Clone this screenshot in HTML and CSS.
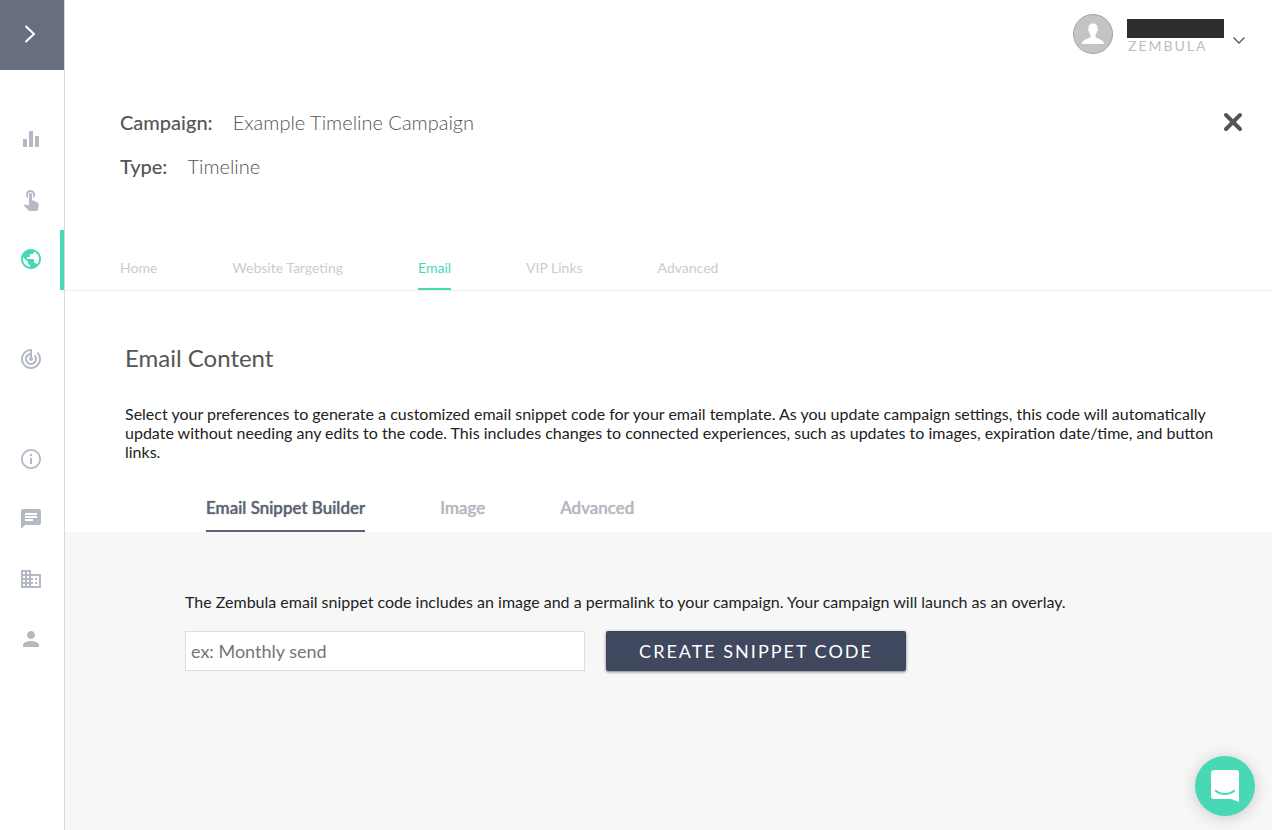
FILE: index.html
```html
<!DOCTYPE html>
<html lang="en">
<head>
<meta charset="utf-8">
<meta name="viewport" content="width=device-width, initial-scale=1">
<title>Email Content</title>
<link rel="stylesheet" href="styles.css">
</head>
<body>
<div class="app">
  <aside class="sidebar">
    <button class="expand" type="button" aria-label="Expand menu">
      <svg width="12" height="20" viewBox="0 0 12 20"><path d="M1.500 2l8.500 8-8.500 8" fill="none" stroke="#fff" stroke-width="2"/></svg>
    </button>
    <nav class="side-nav" aria-label="Main">
      <a class="side-link" href="#" aria-label="Analytics"><svg class="icon" viewBox="0 0 24 24"><path d="M4 12h4v8H4zM10 4h4v16h-4zM16 9h4v11h-4z"/></svg></a>
      <a class="side-link" href="#" aria-label="Experiences"><svg class="icon" viewBox="0 0 24 24"><path d="M9 11.240V7.500C9 6.120 10.120 5 11.500 5S14 6.120 14 7.500v3.740c1.210-.81 2-2.180 2-3.740C16 5.010 13.990 3 11.500 3S7 5.010 7 7.500c0 1.560.79 2.930 2 3.740zm9.840 4.630l-4.540-2.260c-.17-.07-.35-.11-.54-.11H13v-6c0-.83-.67-1.500-1.500-1.500S10 6.670 10 7.500v10.740l-3.430-.72c-.08-.01-.15-.03-.24-.03-.31 0-.59.13-.79.33l-.79.8 4.940 4.940c.27.27.65.44 1.060.44h6.790c.75 0 1.330-.55 1.440-1.280l.75-5.270c.01-.07.02-.14.020-.2 0-.62-.38-1.160-.91-1.380z"/></svg></a>
      <a class="side-link active" href="#" aria-label="Campaigns" aria-current="page"><svg class="icon" viewBox="0 0 24 24"><path d="M12 2C6.480 2 2 6.480 2 12s4.480 10 10 10 10-4.480 10-10S17.520 2 12 2zm-1 17.930c-3.950-.49-7-3.850-7-7.930 0-.62.08-1.210.21-1.790L9 15v1c0 1.100.9 2 2 2v1.930zm6.900-2.540c-.26-.81-1-1.390-1.900-1.390h-1v-3c0-.55-.45-1-1-1H8v-2h2c.55 0 1-.45 1-1V7h2c1.100 0 2-.9 2-2v-.41c2.930 1.190 5 4.060 5 7.410 0 2.080-.8 3.970-2.100 5.390z"/></svg></a>
      <a class="side-link spaced" href="#" aria-label="Tracking"><svg class="icon" viewBox="0 0 24 24"><path d="M19.070 4.930l-1.410 1.410C19.100 7.790 20 9.790 20 12c0 4.420-3.580 8-8 8s-8-3.580-8-8c0-4.080 3.050-7.440 7-7.930v2.020C8.160 6.570 6 9.030 6 12c0 3.310 2.690 6 6 6s6-2.690 6-6c0-1.660-.67-3.160-1.760-4.240l-1.410 1.410C15.550 9.900 16 10.900 16 12c0 2.210-1.790 4-4 4s-4-1.790-4-4c0-1.860 1.280-3.410 3-3.860v2.140c-.6.35-1 .98-1 1.720 0 1.100.9 2 2 2s2-.9 2-2c0-.74-.4-1.380-1-1.720V2h-1C6.480 2 2 6.480 2 12s4.480 10 10 10 10-4.480 10-10c0-2.760-1.120-5.260-2.930-7.070z"/></svg></a>
      <a class="side-link spaced" href="#" aria-label="Information"><svg class="icon" viewBox="0 0 24 24"><path d="M11 17h2v-6h-2v6zm1-15C6.480 2 2 6.480 2 12s4.480 10 10 10 10-4.480 10-10S17.520 2 12 2zm0 18.200c-4.520 0-8.200-3.680-8.200-8.200S7.480 3.800 12 3.800s8.200 3.680 8.200 8.200-3.680 8.200-8.200 8.200zM11 9h2V7h-2v2z"/></svg></a>
      <a class="side-link" href="#" aria-label="Messages"><svg class="icon" viewBox="0 0 24 24"><path d="M20 2H4c-1.100 0-1.990.9-1.990 2L2 22l4-4h14c1.100 0 2-.9 2-2V4c0-1.100-.9-2-2-2zM6 9h12v2H6V9zm8 5H6v-2h8v2zm4-6H6V6h12v2z"/></svg></a>
      <a class="side-link" href="#" aria-label="Company"><svg class="icon" viewBox="0 0 24 24"><path d="M12 7V3H2v18h20V7H12zM6 19H4v-2h2v2zm0-4H4v-2h2v2zm0-4H4V9h2v2zm0-4H4V5h2v2zm4 12H8v-2h2v2zm0-4H8v-2h2v2zm0-4H8V9h2v2zm0-4H8V5h2v2zm10 12h-8v-2h2v-2h-2v-2h2v-2h-2V9h8v10zm-2-8h-2v2h2v-2zm0 4h-2v2h2v-2z"/></svg></a>
      <a class="side-link" href="#" aria-label="Profile"><svg class="icon" viewBox="0 0 24 24"><path d="M12 12c2.210 0 4-1.790 4-4s-1.790-4-4-4-4 1.790-4 4 1.790 4 4 4zm0 2c-2.670 0-8 1.340-8 4v2h16v-2c0-2.660-5.330-4-8-4z"/></svg></a>
    </nav>
  </aside>

  <main class="main">
    <header class="topbar">
      <button class="account" type="button">
        <svg class="avatar" viewBox="0 0 40 40">
          <circle cx="20" cy="20" r="19.500" fill="#c5c4c4" stroke="#a3a3a3"/>
          <path d="M20 9.500c3.300 0 4.600 2 4.500 5 .7.600.3 2.600-.5 3-.3 1.700-1 2.500-1.500 3.200v2.300c1.500 2.200 8.500 2 8.500 7H9c0-5 7-4.800 8.500-7v-2.300c-.5-.7-1.200-1.500-1.500-3.200-.8-.4-1.200-2.400-.5-3-.1-3 1.200-5 4.500-5z" fill="#fff"/>
        </svg>
        <span class="account-text">
          <span class="redacted"></span>
          <span class="org">ZEMBULA</span>
        </span>
        <svg class="caret" width="14" height="10" viewBox="0 0 14 10"><path d="M1.500 2.500L7 8 12.500 2.500" fill="none" stroke="#555" stroke-width="1.300"/></svg>
      </button>
    </header>

    <section class="summary">
      <dl class="facts">
        <div class="fact"><dt>Campaign:</dt><dd>Example Timeline Campaign</dd></div>
        <div class="fact"><dt>Type:</dt><dd>Timeline</dd></div>
      </dl>
      <button class="close" type="button" aria-label="Close">
        <svg width="20" height="20" viewBox="0 0 20 20"><path d="M3 3l14 14M17 3L3 17" stroke="#555" stroke-width="4" stroke-linecap="round"/></svg>
      </button>
    </section>

    <nav class="tabs" aria-label="Campaign">
      <a class="tab" href="#">Home</a>
      <a class="tab" href="#">Website Targeting</a>
      <a class="tab current" href="#" aria-current="page">Email</a>
      <a class="tab" href="#">VIP Links</a>
      <a class="tab" href="#">Advanced</a>
    </nav>

    <section class="content">
      <h1>Email Content</h1>
      <p>Select your preferences to generate a customized email snippet code for your email template. As you update campaign settings, this code will automatically update without needing any edits to the code. This includes changes to connected experiences, such as updates to images, expiration date/time, and button links.</p>
    </section>

    <nav class="subtabs" aria-label="Email">
      <a class="subtab current" href="#" aria-current="page">Email Snippet Builder</a>
      <a class="subtab" href="#">Image</a>
      <a class="subtab" href="#">Advanced</a>
    </nav>

    <form class="builder">
      <label for="snippet-name">The Zembula email snippet code includes an image and a permalink to your campaign. Your campaign will launch as an overlay.</label>
      <div class="builder-row">
        <input id="snippet-name" type="text" placeholder="ex: Monthly send">
        <button class="create" type="button">CREATE SNIPPET CODE</button>
      </div>
    </form>
  </main>
</div>
<button class="chat" type="button" aria-label="Open chat">
  <svg width="28" height="32" viewBox="0 0 28 32"><path d="M3 0h22a3 3 0 0 1 3 3v29l-8-3H3a3 3 0 0 1-3-3V3a3 3 0 0 1 3-3z" fill="#fff"/><path d="M4.800 20.800c5 4.300 13.400 4.300 18.400 0" fill="none" stroke="#48d9b4" stroke-width="2" stroke-linecap="round"/></svg>
</button>
</body>
</html>
```
FILE: styles.css
```css
* { box-sizing: border-box; }

body {
  margin: 0;
  font-family: Lato, "Liberation Sans", sans-serif;
  font-size: 16px;
  color: #222;
  background: #fff;
}

a { text-decoration: none; }

button {
  border: 0;
  padding: 0;
  background: none;
  font: inherit;
  cursor: pointer;
}

svg { display: block; }

.app { display: flex; min-height: 100vh; }

.sidebar { flex: none; width: 65px; border-right: 1px solid #d9d9d9; }

.expand {
  display: flex;
  align-items: center;
  justify-content: center;
  width: 100%;
  height: 70px;
  padding: 0 4px 2px 0;
  background: #676e7e;
}

.side-nav { display: flex; flex-direction: column; padding-top: 40px; }

.side-link {
  display: flex;
  align-items: center;
  height: 60px;
  padding: 0 0 2px 19px;
  border-right: 4px solid transparent;
}

.side-link.active { border-right-color: #48d9b4; }
.spaced { margin-top: 40px; }

.icon { width: 24px; height: 24px; fill: #b4b9c3; }
.active .icon { fill: #48d9b4; }

.main { flex: 1; min-width: 0; display: flex; flex-direction: column; }

.topbar { display: flex; justify-content: flex-end; padding: 14px 26px 0 0; }

.account { display: flex; align-items: flex-start; text-align: left; }
.avatar { width: 40px; height: 40px; margin-right: 14px; }
.account-text { display: flex; flex-direction: column; padding-top: 5px; }
.redacted { width: 97px; height: 19px; background: #2d2d2d; }
.org { padding-left: 1px; font-size: 14px; line-height: 16px; letter-spacing: 2px; color: #b9bdc7; }
.caret { margin: 21px 0 0 8px; }

.summary {
  display: flex;
  justify-content: space-between;
  align-items: flex-start;
  padding: 56px 29px 0 55px;
}

.facts { display: flex; flex-direction: column; gap: 20px; margin: 0; }
.fact { display: flex; gap: 20px; font-size: 20px; line-height: 24px; color: #555; }
.fact dt { font-weight: 500; }
.fact dd { margin: 0; font-weight: 300; }
.close { margin-top: 2px; }

.tabs {
  display: flex;
  gap: 75px;
  margin-top: 81px;
  padding-left: 55px;
  border-bottom: 1px solid #eee;
}

.tab {
  padding-bottom: 12px;
  border-bottom: 2px solid transparent;
  font-size: 14px;
  line-height: 17px;
  color: #ccc;
}

.tab.current { color: #48d9b4; border-bottom-color: #48d9b4; }

.content { padding: 52px 55px 0 60px; }
.content h1 { margin: 0; font-size: 24px; line-height: 29px; font-weight: 400; color: #555; }
.content p { margin: 32px 0 0; line-height: 19px; }

.subtabs { display: flex; gap: 75px; padding: 36px 0 0 141px; }

.subtab {
  padding-bottom: 11px;
  border-bottom: 2px solid transparent;
  font-size: 17px;
  line-height: 22px;
  font-weight: 500;
  color: #b4b7c0;
  text-shadow: 0 0 1px currentColor;
}

.subtab.current { color: #5d6475; border-bottom-color: #5d6475; }

.builder { flex: 1; padding: 60px 120px; background: #f7f7f7; }
.builder label { display: block; line-height: 19px; }
.builder-row { display: flex; gap: 21px; margin-top: 20px; }

.builder input {
  width: 400px;
  height: 40px;
  padding: 0 5px;
  border: 1px solid #ddd;
  background: #fff;
  font: inherit;
  font-size: 18px;
}

.builder input::placeholder { color: #757575; opacity: 1; }

.create {
  width: 300px;
  height: 40px;
  border-radius: 2px;
  background: #3f485f;
  box-shadow: 0 1px 3px rgba(0, 0, 0, 0.5);
  color: #fff;
  font-size: 18px;
  letter-spacing: 2px;
}

.chat {
  position: fixed;
  right: 17px;
  bottom: 14px;
  display: flex;
  align-items: center;
  justify-content: center;
  width: 60px;
  height: 60px;
  border-radius: 50%;
  background: #48d9b4;
  box-shadow: 0 2px 16px rgba(0, 0, 0, 0.18);
}
```
